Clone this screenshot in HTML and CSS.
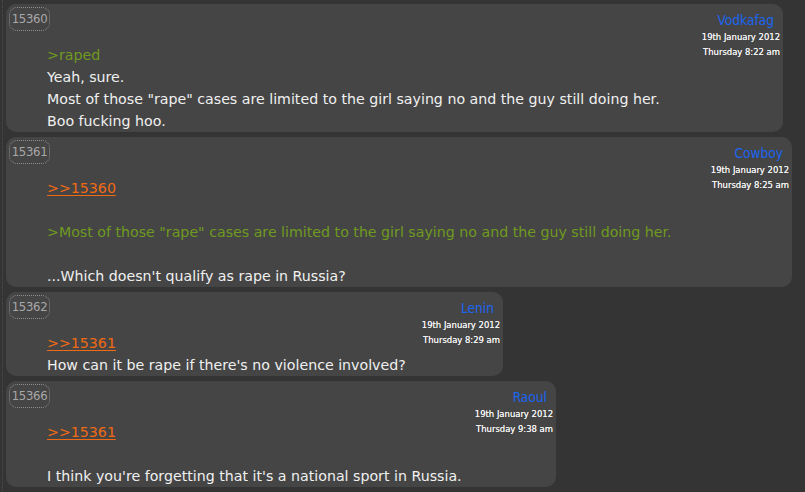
FILE: index.html
```html
<!DOCTYPE html>
<html lang="en">
<head>
<meta charset="utf-8">
<title>Thread</title>
<link rel="stylesheet" href="styles.css">
</head>
<body>
<div class="thread">
  <div class="post post-a">
    <div class="main">
      <span class="num">15360</span>
      <div class="body">
        <div class="line quote">&gt;raped</div>
        <div class="line">Yeah, sure.</div>
        <div class="line">Most of those "rape" cases are limited to the girl saying no and the guy still doing her.</div>
        <div class="line">Boo fucking hoo.</div>
      </div>
    </div>
    <div class="meta">
      <div class="name">Vodkafag</div>
      <div class="date">19th January 2012</div>
      <div class="date">Thursday 8:22 am</div>
    </div>
  </div>

  <div class="post post-b">
    <div class="main">
      <span class="num">15361</span>
      <div class="body">
        <div class="line"><a class="ref" href="#">&gt;&gt;15360</a></div>
        <div class="line blank"></div>
        <div class="line quote">&gt;Most of those "rape" cases are limited to the girl saying no and the guy still doing her.</div>
        <div class="line blank"></div>
        <div class="line">...Which doesn't qualify as rape in Russia?</div>
      </div>
    </div>
    <div class="meta">
      <div class="name">Cowboy</div>
      <div class="date">19th January 2012</div>
      <div class="date">Thursday 8:25 am</div>
    </div>
  </div>

  <div class="post post-c">
    <div class="main">
      <span class="num">15362</span>
      <div class="body">
        <div class="line"><a class="ref" href="#">&gt;&gt;15361</a></div>
        <div class="line">How can it be rape if there's no violence involved?</div>
      </div>
    </div>
    <div class="meta">
      <div class="name">Lenin</div>
      <div class="date">19th January 2012</div>
      <div class="date">Thursday 8:29 am</div>
    </div>
  </div>

  <div class="post post-d">
    <div class="main">
      <span class="num">15366</span>
      <div class="body">
        <div class="line"><a class="ref" href="#">&gt;&gt;15361</a></div>
        <div class="line blank"></div>
        <div class="line">I think you're forgetting that it's a national sport in Russia.</div>
      </div>
    </div>
    <div class="meta">
      <div class="name">Raoul</div>
      <div class="date">19th January 2012</div>
      <div class="date">Thursday 9:38 am</div>
    </div>
  </div>
</div>
</body>
</html>
```
FILE: styles.css
```css
html, body {
  margin: 0;
  padding: 0;
  background: #343434;
  height: 100%;
}
body {
  font-family: "DejaVu Sans", Verdana, sans-serif;
  color: #f0f0f0;
  overflow: hidden;
}
.thread {
  margin-left: 2px;
  padding: 4px 0 0 3px;
  border-left: 1px dotted #4c4c4c;
  min-height: 100%;
  box-sizing: border-box;
}
.post {
  display: grid;
  grid-template-columns: 1fr auto;
  background: #454545;
  border-radius: 10px;
  margin-bottom: 5px;
  padding-right: 3px;
  box-sizing: border-box;
}
.post-a { width: 777px; }
.post-b { width: 786px; }
.post-c { width: 497px; }
.post-d { width: 550px; }
.main {
  display: flex;
  flex-direction: column;
  align-items: flex-start;
}
.num {
  margin: 3px 0 0 3px;
  width: 41px;
  height: 24px;
  box-sizing: border-box;
  border: 1px dotted #8e8e8e;
  border-radius: 8px;
  font-family: "DejaVu Sans Condensed", "DejaVu Sans", sans-serif;
  font-size: 13px;
  line-height: 22px;
  color: #a8a8a8;
  text-align: center;
  letter-spacing: -0.3px;
}
.body {
  margin-top: 13px;
  padding-left: 41px;
  font-size: 14.2px;
  line-height: 22px;
  white-space: nowrap;
}
.line.blank { height: 22px; }
.quote { color: #6f9a1f; }
.ref {
  color: #f06a14;
  text-decoration: underline;
  text-underline-offset: 2px;
}
.meta {
  padding-top: 7px;
  text-align: right;
}
.name {
  font-family: "DejaVu Sans Condensed", "DejaVu Sans", sans-serif;
  font-size: 13.6px;
  line-height: 18px;
  color: #1b66f2;
  padding-right: 6px;
}
.date {
  font-family: "DejaVu Sans Condensed", "DejaVu Sans", sans-serif;
  font-size: 9.4px;
  line-height: 15px;
  color: #f2f2f2;
  text-shadow: 0 0 0.4px #f2f2f2;
}
```
